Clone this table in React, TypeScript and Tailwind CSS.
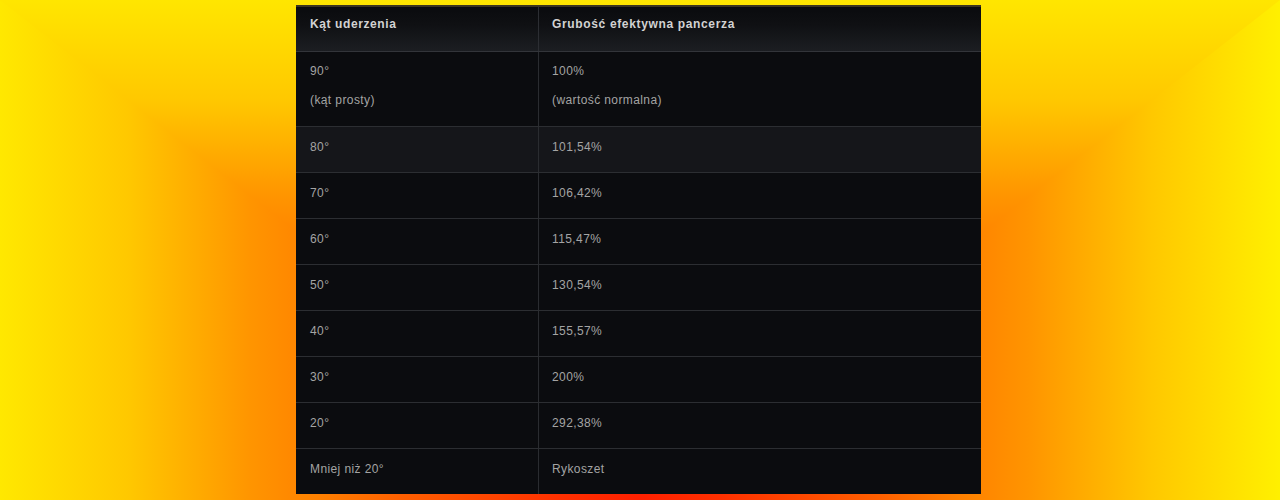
import React from "react";

const rows: { a: string; b: string; alt?: boolean }[] = [
  { a: "80°", b: "101,54%", alt: true },
  { a: "70°", b: "106,42%" },
  { a: "60°", b: "115,47%" },
  { a: "50°", b: "130,54%" },
  { a: "40°", b: "155,57%" },
  { a: "30°", b: "200%" },
  { a: "20°", b: "292,38%" },
  { a: "Mniej niż 20°", b: "Rykoszet" },
];

export default function App() {
  return (
    <div
      className="relative w-full h-[500px] overflow-hidden flex justify-center bg-[linear-gradient(to_right,#ffe800_0%,#ffc800_10%,#ff9500_19.5%,#ff8000_25%,#ff6000_31.25%,#ff3000_43.75%,#ff2000_50%,#ff3000_56.25%,#ff6000_68.75%,#ff8000_75%,#ff9500_80.5%,#ffc800_90%,#fff000_100%)]"
      style={{ fontFamily: '"Liberation Sans", Arial, sans-serif' }}
    >
      {/* upper triangle of the box gradient */}
      <div className="absolute inset-0 [clip-path:polygon(0_0,100%_0,50%_100%)] bg-[linear-gradient(to_top,#ff2000_0%,#ff3000_12.5%,#ff6000_37.5%,#ff8000_50%,#ff9500_61%,#ffc800_80%,#ffe600_100%)]" />
      <div className="relative w-[685px] mr-[3px] mt-[5px] self-start border-t-2 border-[#3b3420] bg-[#0b0c0f]">
        {/* header */}
        <div className="grid grid-cols-[243px_1fr] h-[45px] border-b border-[#33353a] bg-[linear-gradient(to_bottom,#0a0b0e_0%,#0f1013_40%,#1c1e22_100%)]">
          <div className="border-r border-[#2c2e33] pl-[14px] pt-[8px] text-[12px] leading-[18px] font-bold tracking-[0.6px] text-[#d2d2d2]">
            Kąt uderzenia
          </div>
          <div className="pl-[13px] pt-[8px] text-[12px] leading-[18px] font-bold tracking-[0.65px] text-[#d2d2d2]">
            Grubość efektywna pancerza
          </div>
        </div>
        {/* first row */}
        <div className="grid grid-cols-[243px_1fr] h-[75px] border-b border-[#2c2e32] text-[12px] leading-[18px] tracking-[0.4px] text-[#a4a4a4]">
          <div className="border-r border-[#2a2c30] pl-[14px] pt-[10px]">
            <p className="mb-[11px]">90°</p>
            <p>(kąt prosty)</p>
          </div>
          <div className="pl-[13px] pt-[10px]">
            <p className="mb-[11px]">100%</p>
            <p>(wartość normalna)</p>
          </div>
        </div>
        {rows.map((r, i) => (
          <div
            key={r.a}
            className={`grid grid-cols-[243px_1fr] text-[12px] leading-[18px] tracking-[0.4px] text-[#a4a4a4] ${
              i === rows.length - 1 ? "h-[45px]" : "h-[46px] border-b border-[#2c2e32]"
            } ${r.alt ? "bg-[#15161a]" : "bg-[#0b0c0f]"}`}
          >
            <div className="border-r border-[#2a2c30] pl-[14px] pt-[11px]">{r.a}</div>
            <div className="pl-[13px] pt-[11px]">{r.b}</div>
          </div>
        ))}
      </div>
    </div>
  );
}
